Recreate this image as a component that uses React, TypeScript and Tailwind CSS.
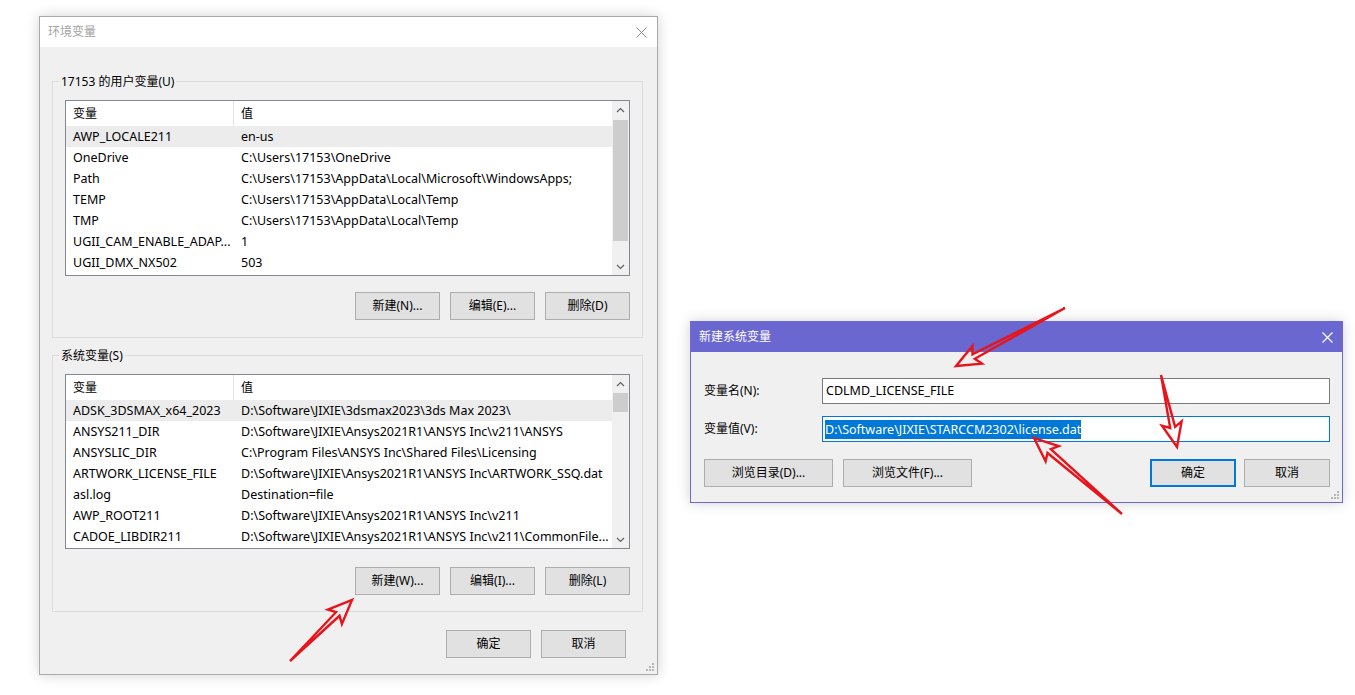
import React from "react";

type Row = [string, string];

const userRows: Row[] = [
  ["AWP_LOCALE211", "en-us"],
  ["OneDrive", "C:\\Users\\17153\\OneDrive"],
  ["Path", "C:\\Users\\17153\\AppData\\Local\\Microsoft\\WindowsApps;"],
  ["TEMP", "C:\\Users\\17153\\AppData\\Local\\Temp"],
  ["TMP", "C:\\Users\\17153\\AppData\\Local\\Temp"],
  ["UGII_CAM_ENABLE_ADAP...", "1"],
  ["UGII_DMX_NX502", "503"],
];

const systemRows: Row[] = [
  ["ADSK_3DSMAX_x64_2023", "D:\\Software\\JIXIE\\3dsmax2023\\3ds Max 2023\\"],
  ["ANSYS211_DIR", "D:\\Software\\JIXIE\\Ansys2021R1\\ANSYS Inc\\v211\\ANSYS"],
  ["ANSYSLIC_DIR", "C:\\Program Files\\ANSYS Inc\\Shared Files\\Licensing"],
  ["ARTWORK_LICENSE_FILE", "D:\\Software\\JIXIE\\Ansys2021R1\\ANSYS Inc\\ARTWORK_SSQ.dat"],
  ["asl.log", "Destination=file"],
  ["AWP_ROOT211", "D:\\Software\\JIXIE\\Ansys2021R1\\ANSYS Inc\\v211"],
  ["CADOE_LIBDIR211", "D:\\Software\\JIXIE\\Ansys2021R1\\ANSYS Inc\\v211\\CommonFile..."],
];

function Chevron({ up }: { up: boolean }) {
  return (
    <svg width="9" height="6" viewBox="0 0 9 6">
      <polyline
        points={up ? "1,5 4.5,1.5 8,5" : "1,1 4.5,4.5 8,1"}
        fill="none"
        stroke="#606060"
        strokeWidth="1.2"
      />
    </svg>
  );
}

function ListView({
  rows,
  thumbTop,
  thumbHeight,
  heightClass,
}: {
  rows: Row[];
  thumbTop: number;
  thumbHeight: number;
  heightClass: string;
}) {
  return (
    <div className={`flex border border-[#828790] bg-white ${heightClass}`}>
      <div className="flex min-w-0 flex-1 flex-col text-[12.5px]">
        <div className="flex h-[25px] items-center text-[12px]">
          <div className="flex h-full w-[168px] items-center border-r border-[#e5e5e5] pl-[7px]">变量</div>
          <div className="pl-[7px]">值</div>
        </div>
        {rows.map(([name, value], i) => (
          <div
            key={name}
            className={`flex h-[21px] items-center whitespace-nowrap pt-[2px] ${i === 0 ? "bg-[#ececec]" : ""}`}
          >
            <div className="w-[168px] overflow-hidden pl-[7px]">{name}</div>
            <div className="overflow-hidden pl-[7px]">{value}</div>
          </div>
        ))}
      </div>
      <div className="flex w-[17px] flex-col bg-[#f0f0f0]">
        <div className="flex h-[17px] items-center justify-center">
          <Chevron up />
        </div>
        <div className="relative flex-1">
          <div
            className="absolute left-[1px] right-[1px] bg-[#cdcdcd]"
            style={{ top: thumbTop, height: thumbHeight }}
          />
        </div>
        <div className="flex h-[17px] items-center justify-center">
          <Chevron up={false} />
        </div>
      </div>
    </div>
  );
}

function Btn({
  children,
  w = "w-[85px]",
  focused = false,
}: {
  children: React.ReactNode;
  w?: string;
  focused?: boolean;
}) {
  return (
    <div
      className={`flex h-[28px] items-center justify-center bg-[#e1e1e1] ${w} ${
        focused ? "border-2 border-[#0078d7]" : "border border-[#adadad]"
      }`}
    >
      {children}
    </div>
  );
}

function GroupBox({
  label,
  children,
  className = "",
}: {
  label: string;
  children: React.ReactNode;
  className?: string;
}) {
  return (
    <div className={`relative border border-[#dcdcdc] px-[12px] pt-[18px] ${className}`}>
      <div className="absolute left-[6px] top-[-9px] bg-[#f0f0f0] px-[2px] leading-[17px]">{label}</div>
      {children}
    </div>
  );
}

function Grip() {
  return (
    <svg width="8" height="8" viewBox="0 0 8 8" className="absolute bottom-[3px] right-[3px]">
      {[
        [6, 0],
        [6, 3],
        [3, 3],
        [6, 6],
        [3, 6],
        [0, 6],
      ].map(([x, y], i) => (
        <rect key={i} x={x} y={y} width="2" height="2" fill="#b8b8b8" />
      ))}
    </svg>
  );
}

function arrowPoints(tx: number, ty: number, px: number, py: number) {
  const dx = px - tx;
  const dy = py - ty;
  const len = Math.hypot(dx, dy);
  const ux = dx / len;
  const uy = dy / len;
  const nx = -uy;
  const ny = ux;
  const h = 20;
  const bx = px - ux * h;
  const by = py - uy * h;
  const b2x = px - ux * (h + 4);
  const b2y = py - uy * (h + 4);
  const w = 2.5;
  const W = 10;
  const pts = [
    [tx, ty],
    [bx + nx * w, by + ny * w],
    [b2x + nx * W, b2y + ny * W],
    [px, py],
    [b2x - nx * W, b2y - ny * W],
    [bx - nx * w, by - ny * w],
  ];
  return pts.map(([x, y]) => `${x.toFixed(1)},${y.toFixed(1)}`).join(" ");
}

export default function App() {
  return (
    <div className="relative h-[695px] w-[1355px] overflow-hidden bg-white font-['Noto_Sans','Noto_Sans_CJK_SC',sans-serif] text-[12px] text-black">
      {/* Environment variables window */}
      <div className="absolute left-[39px] top-[16px] flex h-[659px] w-[619px] flex-col border border-[#aaaaaa] bg-[#f0f0f0] shadow-[0_0_12px_rgba(0,0,0,0.18)]">
        <div className="flex h-[30px] items-center justify-between bg-white pl-[8px] pr-[10px]">
          <span className="text-[#a3a3a3]">环境变量</span>
          <svg width="11" height="11" viewBox="0 0 11 11">
            <path d="M0.5 0.5 L10.5 10.5 M10.5 0.5 L0.5 10.5" stroke="#8a8a8a" strokeWidth="1" />
          </svg>
        </div>
        <div className="relative flex flex-1 flex-col pl-[12px] pr-[14px] pt-[34px]">
          <GroupBox label="17153 的用户变量(U)" className="pb-[17px]">
            <ListView rows={userRows} thumbTop={2} thumbHeight={121} heightClass="h-[176px]" />
            <div className="mt-[16px] flex justify-end gap-[10px]">
              <Btn>新建(N)...</Btn>
              <Btn>编辑(E)...</Btn>
              <Btn>删除(D)</Btn>
            </div>
          </GroupBox>
          <GroupBox label="系统变量(S)" className="mt-[17px] pb-[16px]">
            <ListView rows={systemRows} thumbTop={1} thumbHeight={19} heightClass="h-[175px]" />
            <div className="mt-[18px] flex justify-end gap-[10px]">
              <Btn>新建(W)...</Btn>
              <Btn>编辑(I)...</Btn>
              <Btn>删除(L)</Btn>
            </div>
          </GroupBox>
          <div className="mt-[18px] flex justify-end gap-[10px] pr-[17px]">
            <Btn>确定</Btn>
            <Btn>取消</Btn>
          </div>
          <Grip />
        </div>
      </div>

      {/* New system variable window */}
      <div className="absolute left-[690px] top-[321px] flex h-[182px] w-[653px] flex-col border border-[#6b68cf] bg-[#f0f0f0] shadow-[0_0_12px_rgba(0,0,0,0.18)]">
        <div className="flex h-[30px] items-center justify-between bg-[#6a67d0] pl-[8px] pr-[9px] text-white">
          <span>新建系统变量</span>
          <svg width="11" height="11" viewBox="0 0 11 11">
            <path d="M0.5 0.5 L10.5 10.5 M10.5 0.5 L0.5 10.5" stroke="#ffffff" strokeWidth="1.2" />
          </svg>
        </div>
        <div className="relative flex flex-1 flex-col pl-[13px] pr-[12px] pt-[26px]">
          <div className="flex items-center">
            <div className="w-[118px]">变量名(N):</div>
            <div className="flex h-[26px] flex-1 items-center border border-[#7a7a7a] bg-white pl-[3px] text-[12.5px]">
              CDLMD_LICENSE_FILE
            </div>
          </div>
          <div className="mt-[12px] flex items-center">
            <div className="w-[118px]">变量值(V):</div>
            <div className="flex h-[26px] flex-1 items-center border border-[#0078d7] bg-white pl-[2px] text-[12.5px]">
              <span className="bg-[#0078d7] leading-[19px] text-white">
                D:\Software\JIXIE\STARCCM2302\license.dat
              </span>
            </div>
          </div>
          <div className="mt-[17px] flex items-center">
            <Btn w="w-[129px]">浏览目录(D)...</Btn>
            <div className="ml-[10px]">
              <Btn w="w-[129px]">浏览文件(F)...</Btn>
            </div>
            <div className="ml-auto flex gap-[8px]">
              <Btn focused w="w-[86px]">确定</Btn>
              <Btn w="w-[86px]">取消</Btn>
            </div>
          </div>
          <Grip />
        </div>
      </div>

      {/* Red annotation arrows */}
      <svg className="pointer-events-none absolute left-0 top-0" width="1355" height="695">
        {[
          [290, 661, 352, 600],
          [1065, 308, 956, 366],
          [1161, 375, 1177, 447],
          [1122, 514, 1034, 438],
        ].map(([a, b, c, d], i) => (
          <polygon
            key={i}
            points={arrowPoints(a, b, c, d)}
            fill="none"
            stroke="#e8141b"
            strokeWidth="2.4"
            strokeLinejoin="miter"
          />
        ))}
      </svg>
    </div>
  );
}
